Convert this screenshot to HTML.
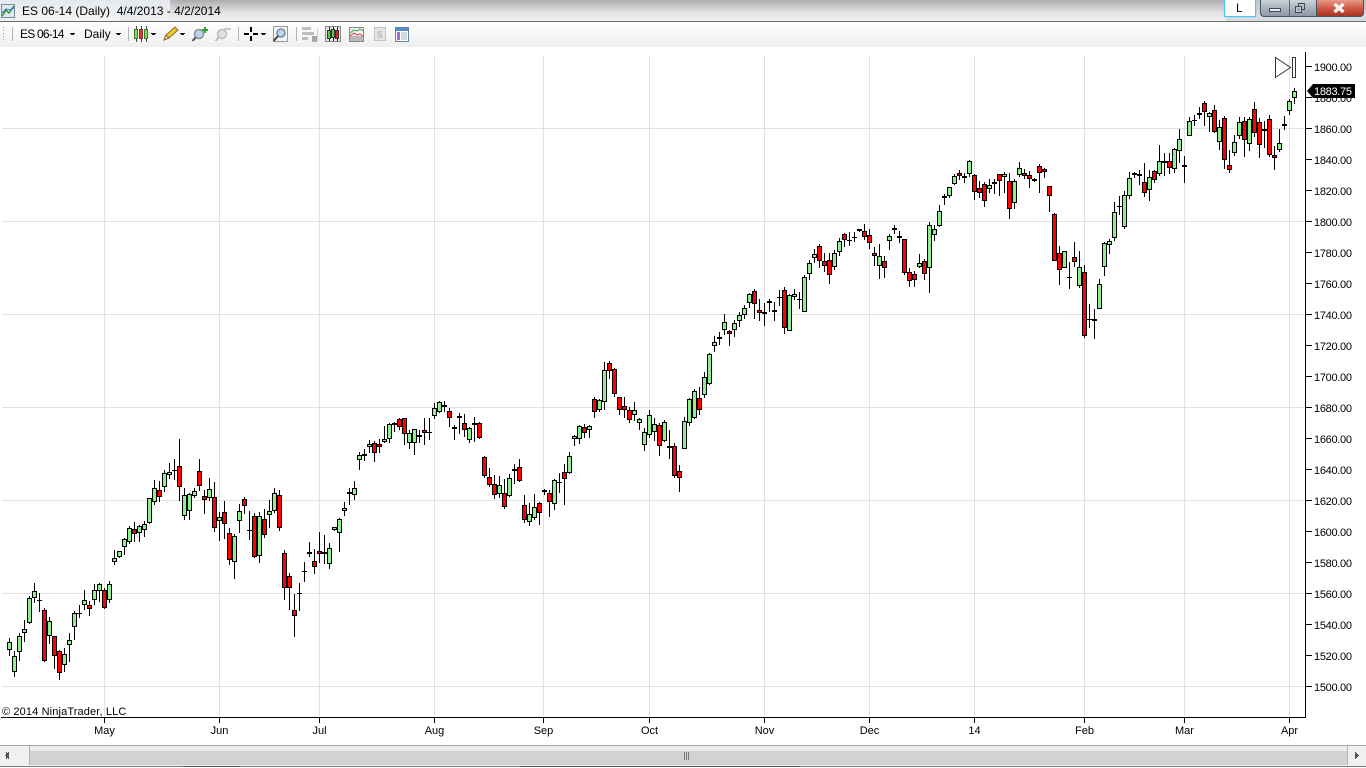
<!DOCTYPE html>
<html><head><meta charset="utf-8"><title>ES 06-14 (Daily)</title>
<style>
html,body{margin:0;padding:0;background:#fff;overflow:hidden}
body{width:1366px;height:768px;position:relative;font-family:"Liberation Sans",sans-serif;color:#000}
.a{position:absolute}
#tb{left:0;top:0;width:1366px;height:21px;background:linear-gradient(#e6e9ec,#eef0f2 60%,#f1f2f3)}
#tb2{left:170px;top:0;width:1056px;height:21px;background:linear-gradient(#a8a8a8,#c6c6c6 30%,#e2e2e2 60%,#f0f0f0);opacity:.95}
#tb3{left:120px;top:0;width:60px;height:21px;background:linear-gradient(90deg,rgba(230,233,236,1),rgba(230,233,236,0))}
#tb4{left:1226px;top:0;width:140px;height:21px;background:linear-gradient(#b9c3cc,#d9dde0 80%)}
#line{left:0;top:21px;width:1366px;height:1px;background:#6e6e6e}
#tool{left:0;top:22px;width:1366px;height:25px;background:linear-gradient(#fff,#f8f8f8 40%,#efefef)}
.t{white-space:pre;font-size:12px;line-height:14px}
.cap{top:0;height:16px;border:1px solid #4b5560;border-top:none;box-sizing:content-box}
</style></head><body>
<div class="a" id="tb"></div><div class="a" id="tb2"></div><div class="a" id="tb3"></div><div class="a" id="tb4"></div>
<div class="a" id="line"></div><div class="a" id="tool"></div>
<div class="a t" style="left:22px;top:4px">ES 06-14 (Daily)  4/4/2013 - 4/2/2014</div>
<div class="a t" style="left:20px;top:27px;letter-spacing:-.8px">ES 06-14</div>
<div class="a t" style="left:84px;top:27px">Daily</div>

<div class="a" style="left:1224px;top:0;width:30px;height:16px;background:#fff;border:1px solid #4cc3ea;border-top:none;box-shadow:0 0 2px #8fdcf5"></div>
<div class="a t" style="left:1236px;top:1px;color:#111">L</div>
<div class="a cap" style="left:1260px;width:28px;background:linear-gradient(#ccd4da,#aab4be 50%,#8b97a3);border-right:none;border-radius:0 0 0 4px"></div>
<div class="a cap" style="left:1289px;width:26px;background:linear-gradient(#ccd4da,#aab4be 50%,#8b97a3);border-left:1px solid #5f6a75;border-right:none"></div>
<div class="a cap" style="left:1316px;width:46px;background:linear-gradient(#e89a88,#cf5a45 50%,#a83322);border-radius:0 0 4px 0"></div>

<svg class="a" style="left:0;top:0" width="1366" height="768" viewBox="0 0 1366 768" xmlns="http://www.w3.org/2000/svg">
<g shape-rendering="crispEdges">
<!-- title icon -->
<rect x="1.5" y="4.5" width="13" height="13" fill="#dfe8f2" stroke="#7a8aa0"/>
<!-- caption icons -->
<rect x="1269.5" y="8.5" width="11" height="3" fill="#e8ecef" stroke="#3d4852"/>
<rect x="1298.5" y="3.5" width="6" height="6" fill="none" stroke="#3d4852"/>
<rect x="1295.5" y="6.5" width="6" height="6" fill="#c0c8d0" stroke="#3d4852"/>
<rect x="1297.5" y="8.5" width="2" height="2" fill="#7d8a96"/>
<!-- toolbar separators -->
<path d="M12.5 27V41M128.5 27V41M238.5 27V41M296.5 27V41" stroke="#b4b4b4"/>
<path d="M3.5 27v1M3.5 30v1M3.5 33v1M3.5 36v1M3.5 39v1" stroke="#999"/>
<!-- dropdown arrows -->
<path d="M70 33h5v1h-1v1h-3v-1h-1zM116 33h5v1h-1v1h-3v-1h-1zM151 33h5v1h-1v1h-3v-1h-1zM180 33h5v1h-1v1h-3v-1h-1zM261 33h5v1h-1v1h-3v-1h-1z" fill="#111"/>
<!-- candle icon -->
<path d="M136.5 26V42M141.5 26V42M146.5 26V42" stroke="#444"/>
<rect x="134.5" y="29.5" width="3" height="9" fill="#7ee05a" stroke="#3a7a2a"/>
<rect x="139.5" y="29.5" width="3" height="9" fill="#e83a3a" stroke="#8a2a2a"/>
<rect x="144.5" y="29.5" width="3" height="9" fill="#7ee05a" stroke="#3a7a2a"/>
<!-- crosshair -->
<path d="M251 27v5M251 36v5M244 34h5M253 34h5" stroke="#000" stroke-width="2"/>
<!-- zoom box -->
<rect x="273.5" y="26.5" width="14" height="15" fill="#f5f5f5" stroke="#9a9a9a"/>
<!-- disabled bars -->
<path d="M302 27h9v3h-9zM302 32h12v3h-12zM302 37h6v3h-6z" fill="#bdbdbd"/>
<rect x="312" y="36" width="5" height="6" fill="#a8a8a8"/>
<path d="M317.5 28V41" stroke="#d0d0d0"/>
<!-- framed candles -->
<rect x="325.5" y="26.5" width="15" height="15" fill="#e8e8e8" stroke="#888"/>
<path d="M329.5 27V41M333.5 27V41M337.5 27V41" stroke="#222"/>
<rect x="327.5" y="30.5" width="3" height="8" fill="#60c840" stroke="#333"/>
<rect x="331.5" y="29.5" width="3" height="8" fill="#60c840" stroke="#333"/>
<rect x="335.5" y="30.5" width="3" height="8" fill="#e02020" stroke="#333"/>
<!-- indicator icon -->
<rect x="349.5" y="27.5" width="14" height="14" fill="#efefef" stroke="#888"/>
<rect x="350" y="36" width="13" height="5" fill="#b8b8b8"/>
<!-- $ doc -->
<rect x="374.5" y="27.5" width="11" height="13" fill="#e6e6e6" stroke="#c2c2c2"/>
<!-- properties doc -->
<rect x="395.5" y="27.5" width="13" height="14" fill="#fff" stroke="#6a7fa8"/>
<rect x="396" y="28" width="12" height="3" fill="#4d8fd0"/>
<rect x="397" y="32" width="3" height="8" fill="#9a70d8"/>
<path d="M401 33h6M401 35h6M401 37h6M401 39h6" stroke="#9fb4cc"/>
<!-- gridlines -->
<path d="M2 128.5H1305M2 221.5H1305M2 314.5H1305M2 407.5H1305M2 500.5H1305M2 593.5H1305M2 686.5H1305" stroke="#e2e2e2"/>
<path d="M104.5 55V717M219.5 55V717M319.5 55V717M434.5 55V717M543.5 55V717M649.5 55V717M764.5 55V717M869.5 55V717M974.5 55V717M1084.5 55V717M1184.5 55V717M1289.5 55V717" stroke="#e2e2e2"/>
<!-- axes -->
<path d="M1305.5 52V718M1 717.5H1306" stroke="#000"/>
<path d="M104.5 718v5M219.5 718v5M319.5 718v5M434.5 718v5M543.5 718v5M649.5 718v5M764.5 718v5M869.5 718v5M974.5 718v5M1084.5 718v5M1184.5 718v5M1289.5 718v5" stroke="#000"/>
<path d="M1306 66.5h6M1306 97.5h6M1306 128.5h6M1306 159.5h6M1306 190.5h6M1306 221.5h6M1306 252.5h6M1306 283.5h6M1306 314.5h6M1306 345.5h6M1306 376.5h6M1306 407.5h6M1306 438.5h6M1306 469.5h6M1306 500.5h6M1306 531.5h6M1306 562.5h6M1306 593.5h6M1306 624.5h6M1306 655.5h6M1306 686.5h6" stroke="#000"/>
<!-- wicks -->
<path stroke="#000" fill="none" d="M9.5 638V656M14.5 651V677M19.5 633V661M24.5 620V642M29.5 596V624M34.5 583V603M39.5 593V612M44.5 608V662M49.5 617V644M54.5 636V669M59.5 650V680M64.5 648V672M69.5 633V662M74.5 611V640M79.5 605V618M84.5 590V610M89.5 601V616M94.5 584V605M99.5 583V602M104.5 588V609M109.5 581V603M114.5 550V565M119.5 551V558M124.5 538V555M129.5 526V544M134.5 522V542M139.5 525V542M144.5 521V537M149.5 498V524M154.5 480V505M159.5 481V502M164.5 470V492M169.5 463V479M174.5 459V480M179.5 439V501M184.5 488V520M189.5 493V520M194.5 488V498M199.5 459V491M204.5 490V514M209.5 478V501M214.5 482V532M219.5 512V541M224.5 501V539M229.5 528V565M234.5 534V579M239.5 504V533M244.5 497V514M249.5 511V540M254.5 513V558M259.5 512V563M264.5 509V538M269.5 500V528M274.5 488V513M279.5 490V531M284.5 550V600M289.5 573V610M294.5 594V637M299.5 583V611M304.5 562V582M309.5 542V557M314.5 549V574M319.5 532V563M324.5 535V564M329.5 543V569M334.5 527V531M339.5 518V552M344.5 502V516M349.5 488V505M354.5 481V500M359.5 452V470M364.5 449V461M369.5 440V453M374.5 441V462M379.5 439V453M384.5 426V443M389.5 423V443M394.5 422V432M399.5 418V430M404.5 418V445M409.5 430V449M414.5 429V455M419.5 430V443M424.5 418V445M429.5 418V440M434.5 403V419M439.5 401V413M444.5 401V412M449.5 408V427M454.5 425V440M459.5 413V434M464.5 414V437M469.5 427V443M474.5 417V442M479.5 422V439M484.5 456V478M489.5 468V487M494.5 475V499M499.5 476V498M504.5 479V509M509.5 474V497M514.5 464V484M519.5 459V482M524.5 495V523M529.5 503V526M534.5 494V520M539.5 502V525M544.5 489V495M549.5 490V517M554.5 479V510M559.5 473V493M564.5 464V505M569.5 452V474M574.5 435V446M579.5 425V444M584.5 424V438M589.5 425V438M594.5 397V418M599.5 399V412M604.5 362V410M609.5 361V379M614.5 368V397M619.5 397V415M624.5 397V418M629.5 407V423M634.5 402V421M639.5 418V430M644.5 428V451M649.5 410V438M654.5 418V441M659.5 423V456M664.5 420V442M669.5 430V459M674.5 443V478M679.5 465V492M684.5 417V449M689.5 398V426M694.5 389V419M699.5 387V415M704.5 372V398M709.5 353V385M714.5 336V352M719.5 332V345M724.5 314V335M729.5 330V346M734.5 320V337M739.5 312V327M744.5 305V319M749.5 293V308M754.5 289V319M759.5 299V321M764.5 303V326M769.5 299V312M774.5 302V321M779.5 290V306M784.5 287V334M789.5 294V331M794.5 289V300M799.5 292V309M804.5 275V312M809.5 260V280M814.5 249V263M819.5 244V268M824.5 253V272M829.5 253V284M834.5 250V270M839.5 238V256M844.5 233V247M849.5 232V246M854.5 232V242M859.5 229V232M864.5 224V240M869.5 229V249M874.5 247V266M879.5 244V279M884.5 256V278M889.5 234V250M894.5 225V234M899.5 231V243M904.5 239V275M909.5 268V287M914.5 271V287M919.5 254V268M924.5 259V280M929.5 222V293M934.5 225V241M939.5 205V227M944.5 194V205M949.5 187V198M954.5 174V185M959.5 170V180M964.5 173V183M969.5 160V177M974.5 174V200M979.5 181V198M984.5 182V207M989.5 179V193M994.5 179V194M999.5 174V196M1004.5 172V193M1009.5 173V219M1014.5 179V209M1019.5 162V177M1024.5 169V179M1029.5 171V188M1034.5 178V182M1039.5 164V193M1044.5 168V178M1049.5 186V212M1054.5 213V261M1059.5 246V285M1064.5 251V268M1069.5 262V289M1074.5 242V267M1079.5 251V288M1084.5 265V338M1089.5 304V328M1094.5 309V339M1099.5 279V309M1104.5 242V276M1109.5 239V254M1114.5 202V241M1119.5 196V215M1124.5 191V229M1129.5 172V199M1134.5 172V178M1139.5 170V185M1144.5 163V197M1149.5 170V201M1154.5 170V183M1159.5 145V176M1164.5 153V176M1169.5 153V174M1174.5 148V173M1179.5 129V163M1184.5 156V183M1189.5 117V136M1194.5 115V126M1199.5 107V119M1204.5 101V126M1209.5 112V132M1214.5 105V133M1219.5 120V150M1224.5 116V169M1229.5 150V173M1234.5 135V156M1239.5 117V139M1244.5 117V157M1249.5 117V151M1254.5 102V137M1259.5 118V158M1264.5 121V148M1269.5 115V157M1274.5 146V170M1279.5 129V152M1284.5 116V130M1289.5 99V115M1294.5 88V104"/>
<!-- doji thin -->
<path stroke="#000" fill="none" d="M37 600.5h5M77 613.5h5M172 470.5h5M247 530.5h5M297 593.5h5M302 571.5h5M427 432.5h5M557 482.5h5M777 297.5h5M797 299.5h5M847 240.5h5M852 237.5h5M1067 277.5h5M1087 319.5h5M1117 206.5h5M1192 120.5h5"/>
<!-- doji thick -->
<path stroke="#000" stroke-width="2" fill="none" d="M307 553h5M347 493h5M417 436h5M452 428h5M542 491h5M767 302h5M772 311h5M857 230h5M892 229h5M1032 180h5M1137 175h5M1162 162h5M1197 114h5M1262 130h5"/>
<!-- green bodies -->
<path stroke="#000" fill="#90ee90" d="M7.5 642.5h4V649.5h-4zM12.5 656.5h4V671.5h-4zM17.5 636.5h4V651.5h-4zM22.5 629.5h4V632.5h-4zM27.5 598.5h4V622.5h-4zM32.5 591.5h4V597.5h-4zM47.5 621.5h4V635.5h-4zM62.5 654.5h4V664.5h-4zM67.5 640.5h4V644.5h-4zM72.5 613.5h4V626.5h-4zM82.5 600.5h4V604.5h-4zM92.5 590.5h4V599.5h-4zM97.5 584.5h4V590.5h-4zM107.5 584.5h4V599.5h-4zM112.5 558.5h4V561.5h-4zM117.5 551.5h4V556.5h-4zM122.5 539.5h4V546.5h-4zM127.5 528.5h4V541.5h-4zM137.5 526.5h4V532.5h-4zM142.5 524.5h4V529.5h-4zM147.5 498.5h4V522.5h-4zM152.5 488.5h4V501.5h-4zM162.5 473.5h4V486.5h-4zM167.5 472.5h4V474.5h-4zM182.5 495.5h4V515.5h-4zM187.5 494.5h4V510.5h-4zM192.5 491.5h4V495.5h-4zM207.5 489.5h4V497.5h-4zM217.5 517.5h4V520.5h-4zM232.5 536.5h4V561.5h-4zM237.5 511.5h4V520.5h-4zM257.5 516.5h4V555.5h-4zM267.5 511.5h4V514.5h-4zM272.5 493.5h4V510.5h-4zM322.5 552.5h4V553.5h-4zM327.5 548.5h4V563.5h-4zM332.5 527.5h4V529.5h-4zM337.5 519.5h4V532.5h-4zM342.5 508.5h4V510.5h-4zM352.5 488.5h4V494.5h-4zM357.5 455.5h4V459.5h-4zM362.5 454.5h4V455.5h-4zM367.5 444.5h4V446.5h-4zM382.5 439.5h4V441.5h-4zM387.5 424.5h4V438.5h-4zM392.5 423.5h4V424.5h-4zM407.5 433.5h4V442.5h-4zM412.5 429.5h4V442.5h-4zM432.5 408.5h4V415.5h-4zM437.5 402.5h4V411.5h-4zM442.5 405.5h4V406.5h-4zM467.5 428.5h4V439.5h-4zM472.5 423.5h4V424.5h-4zM497.5 485.5h4V493.5h-4zM507.5 478.5h4V495.5h-4zM512.5 469.5h4V470.5h-4zM527.5 514.5h4V521.5h-4zM532.5 507.5h4V517.5h-4zM552.5 480.5h4V503.5h-4zM567.5 456.5h4V472.5h-4zM572.5 436.5h4V438.5h-4zM577.5 426.5h4V438.5h-4zM587.5 426.5h4V429.5h-4zM597.5 400.5h4V409.5h-4zM602.5 370.5h4V401.5h-4zM632.5 410.5h4V414.5h-4zM637.5 419.5h4V422.5h-4zM642.5 432.5h4V444.5h-4zM647.5 415.5h4V434.5h-4zM652.5 424.5h4V431.5h-4zM662.5 422.5h4V440.5h-4zM682.5 421.5h4V448.5h-4zM687.5 399.5h4V422.5h-4zM692.5 391.5h4V417.5h-4zM702.5 377.5h4V394.5h-4zM707.5 354.5h4V383.5h-4zM712.5 342.5h4V345.5h-4zM722.5 322.5h4V329.5h-4zM732.5 323.5h4V329.5h-4zM737.5 315.5h4V320.5h-4zM742.5 308.5h4V314.5h-4zM747.5 294.5h4V302.5h-4zM787.5 295.5h4V330.5h-4zM792.5 294.5h4V296.5h-4zM802.5 277.5h4V311.5h-4zM807.5 263.5h4V273.5h-4zM812.5 254.5h4V257.5h-4zM832.5 253.5h4V266.5h-4zM837.5 241.5h4V251.5h-4zM877.5 256.5h4V265.5h-4zM887.5 236.5h4V240.5h-4zM917.5 263.5h4V266.5h-4zM927.5 225.5h4V267.5h-4zM932.5 229.5h4V234.5h-4zM937.5 211.5h4V225.5h-4zM942.5 196.5h4V197.5h-4zM947.5 187.5h4V195.5h-4zM952.5 176.5h4V183.5h-4zM967.5 161.5h4V173.5h-4zM987.5 185.5h4V188.5h-4zM992.5 182.5h4V183.5h-4zM1002.5 174.5h4V176.5h-4zM1012.5 181.5h4V202.5h-4zM1017.5 168.5h4V174.5h-4zM1062.5 251.5h4V267.5h-4zM1077.5 267.5h4V285.5h-4zM1092.5 319.5h4V320.5h-4zM1097.5 284.5h4V308.5h-4zM1102.5 243.5h4V266.5h-4zM1107.5 241.5h4V244.5h-4zM1112.5 212.5h4V237.5h-4zM1122.5 195.5h4V226.5h-4zM1127.5 178.5h4V195.5h-4zM1147.5 177.5h4V189.5h-4zM1157.5 161.5h4V173.5h-4zM1172.5 149.5h4V168.5h-4zM1177.5 139.5h4V150.5h-4zM1182.5 165.5h4V166.5h-4zM1187.5 121.5h4V135.5h-4zM1207.5 113.5h4V116.5h-4zM1217.5 127.5h4V141.5h-4zM1232.5 142.5h4V152.5h-4zM1237.5 122.5h4V135.5h-4zM1247.5 119.5h4V143.5h-4zM1277.5 143.5h4V149.5h-4zM1282.5 124.5h4V125.5h-4zM1287.5 101.5h4V110.5h-4zM1292.5 91.5h4V97.5h-4z"/>
<!-- red bodies -->
<path stroke="#000" fill="#f00" d="M42.5 610.5h4V660.5h-4zM52.5 636.5h4V655.5h-4zM57.5 651.5h4V672.5h-4zM87.5 605.5h4V608.5h-4zM102.5 590.5h4V607.5h-4zM132.5 529.5h4V533.5h-4zM157.5 490.5h4V496.5h-4zM177.5 466.5h4V486.5h-4zM197.5 471.5h4V485.5h-4zM202.5 496.5h4V499.5h-4zM212.5 497.5h4V527.5h-4zM222.5 512.5h4V523.5h-4zM227.5 533.5h4V559.5h-4zM242.5 499.5h4V505.5h-4zM252.5 516.5h4V556.5h-4zM262.5 519.5h4V534.5h-4zM277.5 495.5h4V527.5h-4zM282.5 553.5h4V587.5h-4zM287.5 576.5h4V587.5h-4zM292.5 610.5h4V615.5h-4zM312.5 561.5h4V566.5h-4zM317.5 551.5h4V553.5h-4zM372.5 443.5h4V452.5h-4zM377.5 444.5h4V446.5h-4zM397.5 419.5h4V426.5h-4zM402.5 418.5h4V433.5h-4zM422.5 430.5h4V432.5h-4zM447.5 411.5h4V417.5h-4zM457.5 416.5h4V417.5h-4zM462.5 423.5h4V429.5h-4zM477.5 423.5h4V437.5h-4zM482.5 457.5h4V475.5h-4zM487.5 477.5h4V484.5h-4zM492.5 484.5h4V494.5h-4zM502.5 493.5h4V506.5h-4zM517.5 467.5h4V480.5h-4zM522.5 505.5h4V519.5h-4zM537.5 503.5h4V512.5h-4zM547.5 493.5h4V501.5h-4zM562.5 472.5h4V478.5h-4zM582.5 427.5h4V432.5h-4zM592.5 399.5h4V411.5h-4zM607.5 363.5h4V370.5h-4zM612.5 369.5h4V393.5h-4zM617.5 397.5h4V409.5h-4zM622.5 406.5h4V409.5h-4zM627.5 410.5h4V419.5h-4zM657.5 425.5h4V445.5h-4zM667.5 446.5h4V447.5h-4zM672.5 446.5h4V475.5h-4zM677.5 471.5h4V477.5h-4zM697.5 398.5h4V409.5h-4zM717.5 337.5h4V338.5h-4zM727.5 331.5h4V333.5h-4zM752.5 291.5h4V303.5h-4zM757.5 310.5h4V312.5h-4zM762.5 312.5h4V313.5h-4zM782.5 290.5h4V327.5h-4zM817.5 246.5h4V260.5h-4zM822.5 261.5h4V265.5h-4zM827.5 260.5h4V274.5h-4zM842.5 234.5h4V239.5h-4zM862.5 231.5h4V236.5h-4zM867.5 235.5h4V242.5h-4zM872.5 253.5h4V255.5h-4zM882.5 261.5h4V267.5h-4zM897.5 236.5h4V237.5h-4zM902.5 239.5h4V272.5h-4zM907.5 272.5h4V280.5h-4zM912.5 274.5h4V279.5h-4zM922.5 261.5h4V273.5h-4zM957.5 173.5h4V175.5h-4zM962.5 176.5h4V177.5h-4zM972.5 175.5h4V191.5h-4zM977.5 188.5h4V192.5h-4zM982.5 184.5h4V200.5h-4zM997.5 174.5h4V180.5h-4zM1007.5 181.5h4V208.5h-4zM1022.5 173.5h4V175.5h-4zM1027.5 175.5h4V178.5h-4zM1037.5 166.5h4V172.5h-4zM1042.5 169.5h4V171.5h-4zM1047.5 186.5h4V195.5h-4zM1052.5 214.5h4V260.5h-4zM1057.5 253.5h4V269.5h-4zM1072.5 257.5h4V261.5h-4zM1082.5 272.5h4V335.5h-4zM1132.5 173.5h4V174.5h-4zM1142.5 182.5h4V192.5h-4zM1152.5 171.5h4V179.5h-4zM1167.5 161.5h4V167.5h-4zM1202.5 103.5h4V111.5h-4zM1212.5 110.5h4V131.5h-4zM1222.5 118.5h4V159.5h-4zM1227.5 165.5h4V169.5h-4zM1242.5 121.5h4V139.5h-4zM1252.5 109.5h4V132.5h-4zM1257.5 122.5h4V144.5h-4zM1267.5 119.5h4V154.5h-4zM1272.5 155.5h4V157.5h-4z"/>
<!-- playback marker -->
<rect x="1292.5" y="57.5" width="3" height="20" fill="#fff" stroke="#333"/>
</g>
<path d="M1275.5 57.5L1290.5 67.5L1275.5 77.5Z" fill="#fff" stroke="#333"/>
<!-- title icon chart -->
<path d="M2 16L6 10L9 13L14 6" fill="none" stroke="#2f9a30" stroke-width="1.5"/>
<path d="M2 13L6 9L10 10L14 8" fill="none" stroke="#3a6fc0"/>
<!-- pencil -->
<path d="M164 40l2-5 9-8 3 3-9 8z" fill="#f0c830" stroke="#8a6a20"/>
<path d="M164 40l2-5 3 3z" fill="#f3dfc0" stroke="#8a6a20"/>
<!-- magnifiers -->
<circle cx="199" cy="34" r="4.5" fill="#bcd4ec" stroke="#8a8f96" stroke-width="1.5"/>
<path d="M195.5 37.5L192.5 41" stroke="#555" stroke-width="2"/>
<path d="M205 27v6M202 30h6" stroke="#2aa82a" stroke-width="2"/>
<circle cx="222" cy="34" r="4.5" fill="#e0e0e0" stroke="#c0c0c0" stroke-width="1.5"/>
<path d="M218.5 37.5L215.5 41" stroke="#bbb" stroke-width="2"/>
<path d="M224 29h7" stroke="#c8c8c8" stroke-width="2"/>
<circle cx="281" cy="33" r="4" fill="#bcd4ec" stroke="#7a8a9a" stroke-width="1.5"/>
<path d="M278 36L273.5 41" stroke="#444" stroke-width="2"/>
<!-- indicator lines -->
<path d="M350 36l4-3 3 2 3-1 3 2" fill="none" stroke="#d04040"/>
<path d="M350 33l4-3 3 1 3-2 3 2" fill="none" stroke="#40a040"/>
<text x="377" y="38" font-family="Liberation Sans,sans-serif" font-size="10" font-weight="bold" fill="#bdbdbd">$</text>
<!-- close X -->
<path d="M1334.5 4L1343.5 12M1343.5 4L1334.5 12" stroke="#f6f6f6" stroke-width="3.5"/>
<!-- axis labels -->
<g font-family="Liberation Sans,sans-serif" font-size="11" fill="#000" letter-spacing="-.3">
<text x="1314" y="71">1900.00</text><text x="1314" y="102">1880.00</text><text x="1314" y="133">1860.00</text><text x="1314" y="164">1840.00</text><text x="1314" y="195">1820.00</text><text x="1314" y="226">1800.00</text><text x="1314" y="257">1780.00</text><text x="1314" y="288">1760.00</text><text x="1314" y="319">1740.00</text><text x="1314" y="350">1720.00</text><text x="1314" y="381">1700.00</text><text x="1314" y="412">1680.00</text><text x="1314" y="443">1660.00</text><text x="1314" y="474">1640.00</text><text x="1314" y="505">1620.00</text><text x="1314" y="536">1600.00</text><text x="1314" y="567">1580.00</text><text x="1314" y="598">1560.00</text><text x="1314" y="629">1540.00</text><text x="1314" y="660">1520.00</text><text x="1314" y="691">1500.00</text>
</g>
<path d="M1307 91L1313 84H1355V98H1313Z" fill="#000"/>
<text x="1314" y="95" font-family="Liberation Sans,sans-serif" font-size="11" fill="#fff" letter-spacing="-.3">1883.75</text>
<g font-family="Liberation Sans,sans-serif" font-size="11" fill="#000" text-anchor="middle">
<text x="104.5" y="734">May</text><text x="219.5" y="734">Jun</text><text x="319.5" y="734">Jul</text><text x="434.5" y="734">Aug</text><text x="543.5" y="734">Sep</text><text x="649.5" y="734">Oct</text><text x="764.5" y="734">Nov</text><text x="869.5" y="734">Dec</text><text x="974.5" y="734">14</text><text x="1084.5" y="734">Feb</text><text x="1184.5" y="734">Mar</text><text x="1289.5" y="734">Apr</text>
</g>
<text x="2" y="715" font-family="Liberation Sans,sans-serif" font-size="11" fill="#000" letter-spacing=".13">© 2014 NinjaTrader, LLC</text>
<!-- scrollbar -->
<g shape-rendering="crispEdges">
<rect x="0" y="745" width="1366" height="21" fill="#f0f0f0"/>
<path d="M0 745.5H1366" stroke="#a8a8a8"/>
<rect x="29" y="746" width="1318" height="5" fill="#ececec"/>
<rect x="29" y="751" width="1318" height="14" fill="#d2d2d2"/>
<path d="M29.5 746V765M1347.5 746V765" stroke="#b4b4b4"/>
<path d="M0 766.5H1366" stroke="#7c7c7c"/>
<rect x="0" y="767" width="1366" height="1" fill="#fff"/>
<path d="M6 752h1v7h-1zM5 755h1v1h-1zM7 753h1v5h-1zM8 752h1v7h-1z" fill="#555"/>
<path d="M1355 752h1v7h-1zM1356 753h1v5h-1zM1357 754h1v3h-1zM1358 755h1v1h-1z" fill="#555"/>
<path d="M684.5 752V760M686.5 752V760M688.5 752V760" stroke="#777"/>
<path d="M183 766.5H240M520 766.5H800" stroke="#555"/>
</g>
</svg>
</body></html>
